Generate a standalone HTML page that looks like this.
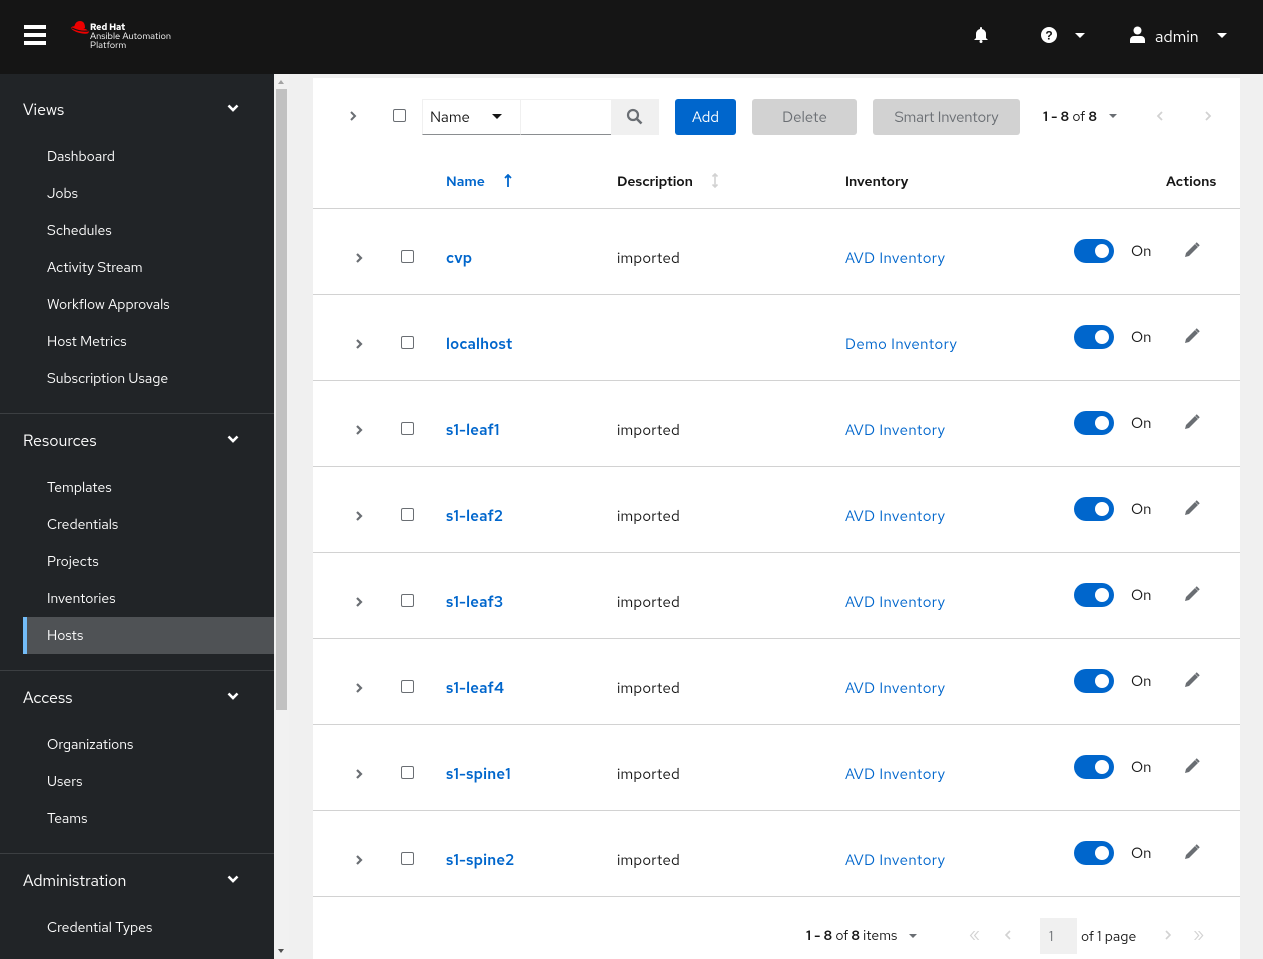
<!DOCTYPE html>
<html><head><style>
*{box-sizing:border-box;margin:0;padding:0}
body{width:1263px;height:959px;overflow:hidden;background:#f0f0f0;font-family:"Red Hat Text","Liberation Sans",sans-serif;position:relative;color:#151515}
.a{position:absolute}
#hdr{left:0;top:0;width:1263px;height:74px;background:#151515}
#side{left:0;top:74px;width:274px;height:885px;background:#212427;color:#fff}
.sec{position:absolute;left:23px;font-size:16px;color:#fff}
.chev{position:absolute;left:227px}
.it{position:absolute;left:47px;font-size:14px;color:#fff}
.div{position:absolute;left:0;width:274px;height:1px;background:#3c3f42}
#card{left:313px;top:78px;width:927px;height:881px;background:#fff}
.row{position:absolute;left:0;width:927px;height:86px;border-bottom:1px solid #d2d2d2}
.cb{position:absolute;width:13px;height:13px;border:1px solid #6a6e73;border-radius:2px;background:#fff}
.lnk{color:#06c}
.tog{position:absolute;width:40px;height:24px;border-radius:12px;background:#06c}
.tog:after{content:"";position:absolute;right:5px;top:5px;width:14px;height:14px;border-radius:50%;background:#fff}
.t{position:absolute;white-space:nowrap}
</style></head><body>
<div id="hdr" class="a">
 <div class="a" style="left:24px;top:25px;width:22px;height:4px;background:#fff"></div>
 <div class="a" style="left:24px;top:33px;width:22px;height:4px;background:#fff"></div>
 <div class="a" style="left:24px;top:41px;width:22px;height:4px;background:#fff"></div>
 <svg class="a" style="left:70px;top:19px" width="20" height="15" viewBox="0 0 20 15"><ellipse cx="10" cy="11" rx="9" ry="3" fill="#e00" transform="rotate(15 10 11)"/><path d="M4 9 Q5 2 10 2 Q15 2 15 9Z" fill="#e00"/><path d="M2 9 Q10 13 18 12" stroke="#151515" stroke-width="1.2" fill="none"/></svg>
 <div class="t" style="left:90px;top:22px;font-size:9px;font-weight:bold;color:#fff;line-height:10px">Red Hat</div>
 <div class="t" style="left:90px;top:32px;font-size:9.3px;color:#fff;line-height:9px">Ansible Automation<br>Platform</div>
 <svg class="a" style="left:973px;top:26px" width="16" height="17" viewBox="0 0 16 17"><path d="M8 1a1 1 0 0 1 1 1v1a5 5 0 0 1 4 5v4l2 2H1l2-2V8a5 5 0 0 1 4-5V2a1 1 0 0 1 1-1z" fill="#fff"/><circle cx="8" cy="15.5" r="1.5" fill="#fff"/></svg>
 <svg class="a" style="left:1041px;top:27px" width="16" height="16" viewBox="0 0 16 16"><circle cx="8" cy="8" r="8" fill="#fff"/><text x="8" y="12.5" font-size="12" font-weight="bold" text-anchor="middle" fill="#151515" font-family="Liberation Sans">?</text></svg>
 <div class="a" style="left:1075px;top:33px;border:5px solid transparent;border-top:5px solid #fff;border-bottom:0"></div>
 <svg class="a" style="left:1130px;top:26px" width="15" height="17" viewBox="0 0 15 17"><circle cx="7.5" cy="4.5" r="4" fill="#fff"/><path d="M0 17v-3a4 4 0 0 1 4-4h7a4 4 0 0 1 4 4v3z" fill="#fff"/></svg>
 <div class="t" style="left:1155px;top:26px;font-size:16px;color:#fff">admin</div>
 <div class="a" style="left:1217px;top:33px;border:5px solid transparent;border-top:5px solid #fff;border-bottom:0"></div>
</div>
<div id="side" class="a">
 <div class="sec" style="top:25px">Views</div>
 <div class="it" style="top:74px">Dashboard</div>
 <div class="it" style="top:111px">Jobs</div>
 <div class="it" style="top:148px">Schedules</div>
 <div class="it" style="top:185px">Activity Stream</div>
 <div class="it" style="top:222px">Workflow Approvals</div>
 <div class="it" style="top:259px">Host Metrics</div>
 <div class="it" style="top:296px">Subscription Usage</div>
 <div class="div" style="top:339px"></div>
 <div class="sec" style="top:356px">Resources</div>
 <div class="it" style="top:405px">Templates</div>
 <div class="it" style="top:442px">Credentials</div>
 <div class="it" style="top:479px">Projects</div>
 <div class="it" style="top:516px">Inventories</div>
 <div class="a" style="left:23px;top:543px;width:251px;height:37px;background:#4f5255;border-left:4px solid #73bcf7"></div>
 <div class="it" style="top:553px">Hosts</div>
 <div class="div" style="top:596px"></div>
 <div class="sec" style="top:613px">Access</div>
 <div class="it" style="top:662px">Organizations</div>
 <div class="it" style="top:699px">Users</div>
 <div class="it" style="top:736px">Teams</div>
 <div class="div" style="top:779px"></div>
 <div class="sec" style="top:796px">Administration</div>
 <div class="it" style="top:845px">Credential Types</div>
 <svg class="chev" style="top:30px" width="12" height="8" viewBox="0 0 12 8"><path d="M1.5 1.5l4.5 4.5 4.5-4.5" stroke="#fff" stroke-width="2.6" fill="none"/></svg>
 <svg class="chev" style="top:361px" width="12" height="8" viewBox="0 0 12 8"><path d="M1.5 1.5l4.5 4.5 4.5-4.5" stroke="#fff" stroke-width="2.6" fill="none"/></svg>
 <svg class="chev" style="top:618px" width="12" height="8" viewBox="0 0 12 8"><path d="M1.5 1.5l4.5 4.5 4.5-4.5" stroke="#fff" stroke-width="2.6" fill="none"/></svg>
 <svg class="chev" style="top:801px" width="12" height="8" viewBox="0 0 12 8"><path d="M1.5 1.5l4.5 4.5 4.5-4.5" stroke="#fff" stroke-width="2.6" fill="none"/></svg>
</div>
<div class="a" style="left:274px;top:74px;width:15px;height:885px;background:#f1f1f1"></div>
<div class="a" style="left:276px;top:89px;width:11px;height:621px;background:#c1c1c1"></div>
<div class="a" style="left:278px;top:80px;border:3.5px solid transparent;border-bottom:4px solid #a3a3a3;border-top:0"></div>
<div class="a" style="left:278px;top:949px;border:3.5px solid transparent;border-top:4px solid #505050;border-bottom:0"></div>
<div id="card" class="a">
 <svg class="a" style="left:36px;top:33px" width="8" height="10" viewBox="0 0 8 10"><path d="M2 1l4 4-4 4" stroke="#6a6e73" stroke-width="2" fill="none"/></svg>
 <div class="cb" style="left:80px;top:31px"></div>
 <div class="a" style="left:109px;top:21px;width:98px;height:36px;border-bottom:1px solid #8a8d90;border-top:1px solid #f0f0f0;border-left:1px solid #f0f0f0"></div>
 <div class="t" style="left:117px;top:29px;font-size:15px">Name</div>
 <div class="a" style="left:179px;top:36px;border:5px solid transparent;border-top:5px solid #151515;border-bottom:0"></div>
 <div class="a" style="left:207px;top:21px;width:91px;height:36px;border-bottom:1px solid #8a8d90;border-top:1px solid #f0f0f0;border-left:1px solid #f0f0f0"></div>
 <div class="a" style="left:298px;top:21px;width:48px;height:36px;background:#f0f0f0"></div>
 <svg class="a" style="left:313px;top:30px" width="17" height="17" viewBox="0 0 17 17"><circle cx="7" cy="7" r="5" stroke="#6a6e73" stroke-width="2.2" fill="none"/><path d="M10.5 10.5l5 5" stroke="#6a6e73" stroke-width="2.6"/></svg>
 <div class="a" style="left:362px;top:21px;width:61px;height:36px;background:#06c;border-radius:3px;color:#fff;font-size:15px;text-align:center;line-height:36px">Add</div>
 <div class="a" style="left:439px;top:21px;width:105px;height:36px;background:#d2d2d2;border-radius:3px;color:#6a6e73;font-size:15px;text-align:center;line-height:36px">Delete</div>
 <div class="a" style="left:560px;top:21px;width:147px;height:36px;background:#d2d2d2;border-radius:3px;color:#6a6e73;font-size:15px;text-align:center;line-height:36px;letter-spacing:-0.2px">Smart Inventory</div>
 <div class="t" style="left:730px;top:30px;font-size:14px"><b style="font-weight:600">1 - 8</b> of <b style="font-weight:600">8</b></div>
 <div class="a" style="left:796px;top:36px;border:4px solid transparent;border-top:4px solid #6a6e73;border-bottom:0"></div>
 <svg class="a" style="left:843px;top:33px" width="8" height="10" viewBox="0 0 8 10"><path d="M6 1L2 5l4 4" stroke="#d2d2d2" stroke-width="1.8" fill="none"/></svg>
 <svg class="a" style="left:891px;top:33px" width="8" height="10" viewBox="0 0 8 10"><path d="M2 1l4 4-4 4" stroke="#d2d2d2" stroke-width="1.8" fill="none"/></svg>
 <div class="t" style="left:133px;top:95px;font-size:14px;font-weight:600;color:#06c">Name</div>
 <svg class="a" style="left:191px;top:96px" width="8" height="13" viewBox="0 0 8 13"><path d="M4 1v12M1 4l3-3 3 3" stroke="#06c" stroke-width="1.8" fill="none"/></svg>
 <div class="t" style="left:304px;top:95px;font-size:14px;font-weight:600;letter-spacing:-0.1px">Description</div>
 <svg class="a" style="left:398px;top:95px" width="8" height="15" viewBox="0 0 8 15"><path d="M4 1v13M1.5 3.5L4 1l2.5 2.5M1.5 11.5L4 14l2.5-2.5" stroke="#d2d2d2" stroke-width="1.6" fill="none"/></svg>
 <div class="t" style="left:532px;top:95px;font-size:14px;font-weight:600">Inventory</div>
 <div class="t" style="left:853px;top:95px;font-size:14px;font-weight:600">Actions</div>
 <div class="a" style="left:0;top:130px;width:927px;height:1px;background:#d2d2d2"></div>
</div>
<div id="rows"></div>
<script>
var d=[["cvp","imported","AVD Inventory"],["localhost","","Demo Inventory"],["s1-leaf1","imported","AVD Inventory"],["s1-leaf2","imported","AVD Inventory"],["s1-leaf3","imported","AVD Inventory"],["s1-leaf4","imported","AVD Inventory"],["s1-spine1","imported","AVD Inventory"],["s1-spine2","imported","AVD Inventory"]];
var h="";
d.forEach(function(r,i){var y=209+i*86;
h+='<div class="row" style="left:313px;top:'+y+'px">'+
'<svg class="a" style="left:42px;top:44px" width="8" height="10" viewBox="0 0 8 10"><path d="M2 1l4 4-4 4" stroke="#6a6e73" stroke-width="2.2" fill="none"/></svg>'+
'<div class="cb" style="left:88px;top:41px"></div>'+
'<div class="t lnk" style="left:133px;top:39px;font-size:15px;font-weight:600;letter-spacing:0.2px">'+r[0]+'</div>'+
'<div class="t" style="left:304px;top:39px;font-size:15px;letter-spacing:0.2px">'+r[1]+'</div>'+
'<div class="t lnk" style="left:532px;top:39px;font-size:15px;letter-spacing:0.4px">'+r[2]+'</div>'+
'<div class="tog" style="left:761px;top:30px"></div>'+
'<div class="t" style="left:818px;top:32px;font-size:15px">On</div>'+
'<svg class="a" style="left:871px;top:33px" width="16" height="16" viewBox="0 0 16 16"><path d="M1 15l1-4 9-9 3 3-9 9z" fill="#6a6e73"/><path d="M12 1l3 3" stroke="#6a6e73" stroke-width="2"/></svg>'+
'</div>';});
document.getElementById("rows").innerHTML=h;
</script>
<div class="t" style="left:806px;top:927px;font-size:14px"><b style="font-weight:600">1 - 8</b> of <b style="font-weight:600">8</b> items</div>
<div class="a" style="left:909px;top:934px;border:4px solid transparent;border-top:4px solid #6a6e73;border-bottom:0"></div>
<div class="t" style="left:969px;top:923px;font-size:18px;color:#d2d2d2">«</div>
<svg class="a" style="left:1004px;top:930px" width="8" height="10" viewBox="0 0 8 10"><path d="M6 1L2 5l4 4" stroke="#d2d2d2" stroke-width="1.6" fill="none"/></svg>
<div class="a" style="left:1040px;top:918px;width:37px;height:36px;background:#f0f0f0;color:#6a6e73;font-size:14px;padding:10px 0 0 9px">1</div>
<div class="t" style="left:1081px;top:928px;font-size:14px">of 1 page</div>
<svg class="a" style="left:1164px;top:930px" width="8" height="10" viewBox="0 0 8 10"><path d="M2 1l4 4-4 4" stroke="#d2d2d2" stroke-width="1.6" fill="none"/></svg>
<div class="t" style="left:1193px;top:923px;font-size:18px;color:#d2d2d2">»</div>
</body></html>
